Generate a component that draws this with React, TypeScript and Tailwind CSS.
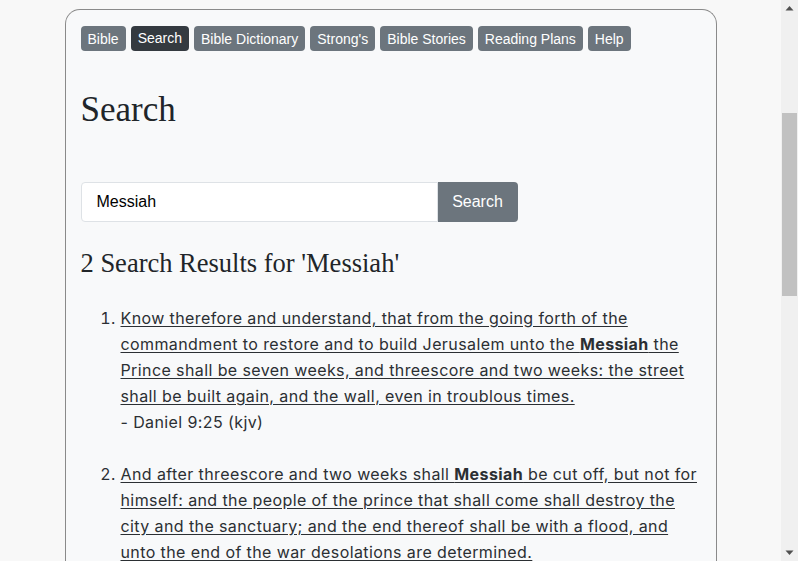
const navItems = [
  "Bible",
  "Search",
  "Bible Dictionary",
  "Strong's",
  "Bible Stories",
  "Reading Plans",
  "Help",
];

const results = [
  {
    before:
      "Know therefore and understand, that from the going forth of the commandment to restore and to build Jerusalem unto the ",
    after:
      " the Prince shall be seven weeks, and threescore and two weeks: the street shall be built again, and the wall, even in troublous times.",
    ref: "- Daniel 9:25 (kjv)",
  },
  {
    before: "And after threescore and two weeks shall ",
    after:
      " be cut off, but not for himself: and the people of the prince that shall come shall destroy the city and the sanctuary; and the end thereof shall be with a flood, and unto the end of the war desolations are determined.",
    ref: "- Daniel 9:26 (kjv)",
  },
];

export default function App() {
  return (
    <div className="flex h-[561px] w-[798px] overflow-hidden bg-[#f8f8f8]">
      <main className="flex-1 pt-[9px]">
        <div className="mx-auto w-[652px] rounded-t-[15px] border border-b-0 border-[#8a8a8a] bg-[#f8f9fa] px-[15px] pt-4 pb-10">
          {/* Nav */}
          <nav className="flex gap-[5px] font-['Liberation_Sans',Arial,sans-serif] text-[14px] leading-[21px] text-white">
            {navItems.map((item) => (
              <a
                key={item}
                href="#"
                className={`h-[25px] rounded-[4px] px-[7px] ${
                  item === "Search" ? "bg-[#343a40] pt-[2px]" : "bg-[#6c757d] pt-[3px]"
                }`}
              >
                {item}
              </a>
            ))}
          </nav>

          <h1 className="mt-[38px] font-['Liberation_Serif',serif] text-[35px] leading-[42px] text-[#212529]">
            Search
          </h1>

          {/* Search form */}
          <form className="mt-[51px] flex h-[40px] w-[437px] font-['Liberation_Sans',Arial,sans-serif] text-[16px]">
            <input
              defaultValue="Messiah"
              className="h-full flex-1 rounded-l-[4px] border border-[#dee2e6] bg-white px-[15px] text-black outline-none"
            />
            <button
              type="button"
              className="h-full w-[80px] rounded-r-[4px] bg-[#6c757d] text-white"
            >
              Search
            </button>
          </form>

          <h2 className="mt-[26px] font-['Liberation_Serif',serif] text-[26.5px] leading-[31px] text-[#212529]">
            2 Search Results for 'Messiah'
          </h2>

          {/* Results */}
          <ol className="mt-[26px] list-decimal pl-[40px] font-['Inter',sans-serif] text-[16px] leading-[26px] tracking-[0.4px] text-[#2b2f33]">
            {results.map((r, i) => (
              <li key={i} className="mb-[26px] pr-[2px]">
                <a href="#" className="underline underline-offset-2">
                  {r.before}
                  <b className="font-bold">Messiah</b>
                  {r.after}
                </a>
                <br />
                <span>{r.ref}</span>
                <br />
              </li>
            ))}
          </ol>
        </div>
      </main>

      {/* Scrollbar */}
      <div className="flex w-[17px] flex-col items-center bg-[#f0f0f0]">
        <svg width="9" height="17" viewBox="0 0 9 17" className="shrink-0">
          <path d="M0.5 10.5 L4.5 6 L8.5 10.5 Z" fill="#505050" />
        </svg>
        <div className="mt-[96px] h-[183px] w-[15px] bg-[#c1c1c1]" />
        <div className="flex-1" />
        <svg width="9" height="17" viewBox="0 0 9 17" className="shrink-0">
          <path d="M0.5 6.5 L4.5 11 L8.5 6.5 Z" fill="#505050" />
        </svg>
      </div>
    </div>
  );
}
